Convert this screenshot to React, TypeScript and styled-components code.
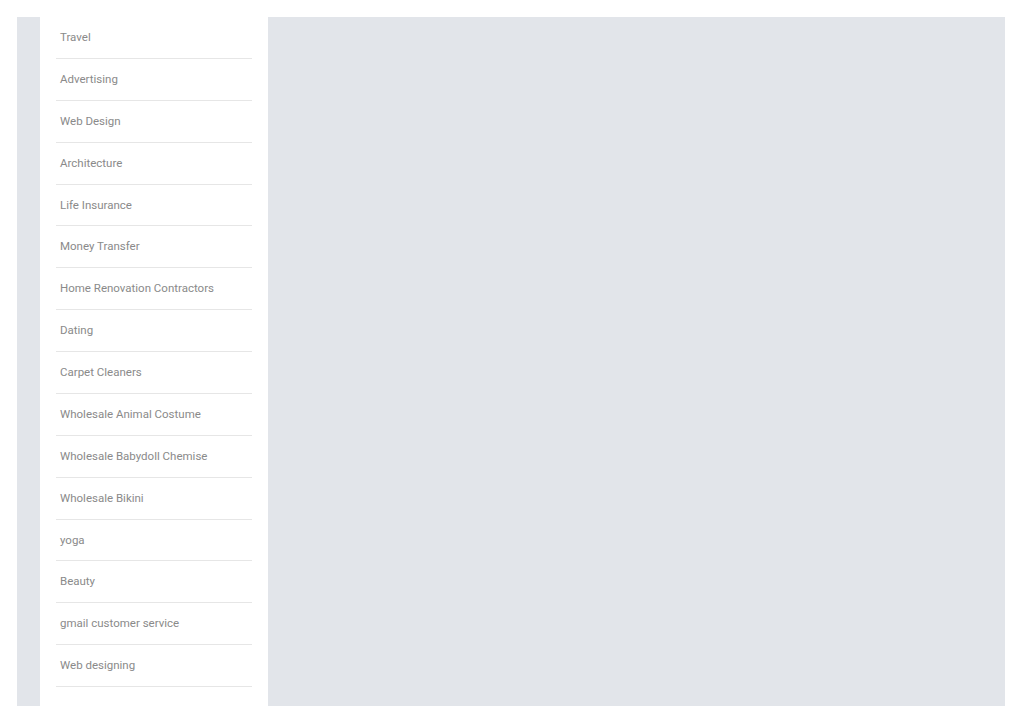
import React from "react";
import styled, { createGlobalStyle } from "styled-components";

const GlobalStyle = createGlobalStyle`
    html, body {
        margin: 0;
        padding: 0;
        background: #ffffff;
    }
    body {
        font-family: Roboto, "Liberation Sans", sans-serif;
    }
`;

const Page = styled.div`
    display: flex;
    height: 689px;
    margin: 17px 19px 17px 17px;
    padding-left: 23px;
    background-color: #e2e5ea;
`;

const Sidebar = styled.aside`
    width: 228px;
    flex-shrink: 0;
    background-color: #ffffff;
    padding: 0 16px 19px;
    box-sizing: border-box;
`;

const CategoryList = styled.ul`
    list-style: none;
    margin: 0;
    padding: 0;
`;

const Category = styled.li`
    padding: 12px 4px;
    line-height: 16.87px;
    font-size: 11.5px;
    font-weight: 400;
    color: #8a8a8a;
    border-bottom: 1px solid #e6e6e6;
    white-space: nowrap;
`;

const Main = styled.main`
    flex: 1;
    background-color: #e2e5ea;
`;

const categories = [
    "Travel",
    "Advertising",
    "Web Design",
    "Architecture",
    "Life Insurance",
    "Money Transfer",
    "Home Renovation Contractors",
    "Dating",
    "Carpet Cleaners",
    "Wholesale Animal Costume",
    "Wholesale Babydoll Chemise",
    "Wholesale Bikini",
    "yoga",
    "Beauty",
    "gmail customer service",
    "Web designing",
];

function App() {
    return (
        <>
            <GlobalStyle />
            <Page>
                <Sidebar>
                    <CategoryList>
                        {categories.map(name => (
                            <Category key={name}>{name}</Category>
                        ))}
                    </CategoryList>
                </Sidebar>
                <Main />
            </Page>
        </>
    );
}

export default App;
